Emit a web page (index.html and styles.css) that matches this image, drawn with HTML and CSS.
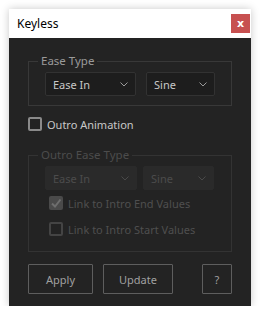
FILE: index.html
```html
<!DOCTYPE html>
<html>
<head>
<meta charset="utf-8">
<link rel="stylesheet" href="styles.css">
</head>
<body>
<div class="window">
  <div class="titlebar">
    <span class="title">Keyless</span>
    <span class="close">x</span>
  </div>
  <div class="panel">
    <fieldset class="group">
      <legend>Ease Type</legend>
      <div class="row">
        <div class="select w91">Ease In<svg class="chev" viewBox="0 0 8 5" width="8" height="5"><path d="M0.5 0.5 L4 4 L7.5 0.5" fill="none" stroke="#9a9a9a" stroke-width="1"/></svg></div>
        <div class="select w69">Sine<svg class="chev" viewBox="0 0 8 5" width="8" height="5"><path d="M0.5 0.5 L4 4 L7.5 0.5" fill="none" stroke="#9a9a9a" stroke-width="1"/></svg></div>
      </div>
    </fieldset>
    <label class="check main"><span class="box"></span>Outro Animation</label>
    <fieldset class="group disabled">
      <legend>Outro Ease Type</legend>
      <div class="row tight">
        <div class="select off w92">Ease In<svg class="chev" viewBox="0 0 8 5" width="8" height="5"><path d="M0.5 0.5 L4 4 L7.5 0.5" fill="none" stroke="#4a4a4a" stroke-width="1"/></svg></div>
        <div class="select off w71">Sine<svg class="chev" viewBox="0 0 8 5" width="8" height="5"><path d="M0.5 0.5 L4 4 L7.5 0.5" fill="none" stroke="#4a4a4a" stroke-width="1"/></svg></div>
      </div>
      <label class="check sub"><span class="box filled"><svg viewBox="0 0 14 14" width="14" height="14"><path d="M3 7.5 L6 10.5 L11.5 3.5" fill="none" stroke="#6e6e6e" stroke-width="2"/></svg></span>Link to Intro End Values</label>
      <label class="check sub second"><span class="box dim"></span>Link to Intro Start Values</label>
    </fieldset>
    <div class="buttons">
      <button class="btn w65">Apply</button>
      <button class="btn w70">Update</button>
      <span class="spacer"></span>
      <button class="btn w30">?</button>
    </div>
  </div>
</div>
</body>
</html>
```
FILE: styles.css
```css
html, body {
  margin: 0;
  padding: 0;
  background: #ffffff;
}
body {
  font-family: "Noto Sans", "Open Sans", sans-serif;
  font-size: 11px;
}
.window {
  margin: 9px 0 0 9px;
  width: 242px;
  height: 297px;
  display: flex;
  flex-direction: column;
  box-shadow: 0 0 8px rgba(0,0,0,0.22);
}
.titlebar {
  height: 29px;
  background: #ffffff;
  display: flex;
  align-items: center;
  justify-content: space-between;
  padding: 0 1px 0 8px;
  box-sizing: border-box;
}
.title {
  font-family: "Noto Sans", sans-serif;
  font-size: 12px;
  color: #000;
  margin-top: -1px;
}
.close {
  width: 19px;
  height: 19px;
  background: #c75050;
  color: #fff;
  font-family: "DejaVu Sans", sans-serif;
  font-weight: bold;
  font-size: 11px;
  display: flex;
  align-items: center;
  justify-content: center;
  line-height: 1;
}
.panel {
  flex: 1;
  background: #232323;
  padding: 15px 19px 0 19px;
  display: flex;
  flex-direction: column;
}
.group {
  margin: 0;
  border: 1px solid #383838;
  padding: 3px 0 9px 16px;
  min-width: 0;
}
.group legend {
  color: #9a9a9a;
  padding: 0 3px;
  margin-left: -7px;
  line-height: 16px;
  font-size: 11.5px;
}
.row {
  display: flex;
  gap: 10px;
}
.row.tight {
  gap: 6px;
}
.select {
  height: 24px;
  box-sizing: border-box;
  background: #1d1d1d;
  border: 1px solid #323232;
  border-radius: 2px;
  color: #c8c8c8;
  display: flex;
  align-items: center;
  justify-content: space-between;
  padding: 0 7px 0 7px;
}
.select.off {
  background: #2a2a2a;
  border-color: #2a2a2a;
  color: #4c4c4c;
}
.w91 { width: 91px; }
.w69 { width: 69px; }
.w92 { width: 92px; }
.w71 { width: 71px; }
.check {
  display: flex;
  align-items: center;
  color: #c8c8c8;
}
.check .box {
  width: 14px;
  height: 14px;
  box-sizing: border-box;
  border: 2px solid #8a8a8a;
  border-radius: 2px;
  margin-right: 5px;
  flex: none;
  display: flex;
}
.check.main {
  margin-top: 11px;
  margin-bottom: 16px;
  height: 14px;
}
.group.disabled {
  border-color: #333333;
  padding-top: 3px;
  padding-bottom: 15px;
}
.group.disabled legend {
  color: #4c4c4c;
}
.check.sub {
  color: #4f4f4f;
  margin-left: 4px;
  margin-top: 6px;
  height: 14px;
}
.check.sub.second {
  margin-top: 12px;
}
.check .box.filled {
  background: #4a4a4a;
  border: none;
}
.check .box.dim {
  border: 2px solid #444;
}
.buttons {
  display: flex;
  gap: 10px;
  margin-top: 12px;
}
.spacer { flex: 1; }
.btn {
  height: 30px;
  background: transparent;
  border: 1px solid #5e5e5e;
  border-radius: 1px;
  color: #a0a0a0;
  font-family: "Noto Sans", sans-serif;
  font-size: 11px;
  padding: 0;
}
.w65 { width: 65px; }
.w70 { width: 70px; }
.w30 { width: 30px; }
```
